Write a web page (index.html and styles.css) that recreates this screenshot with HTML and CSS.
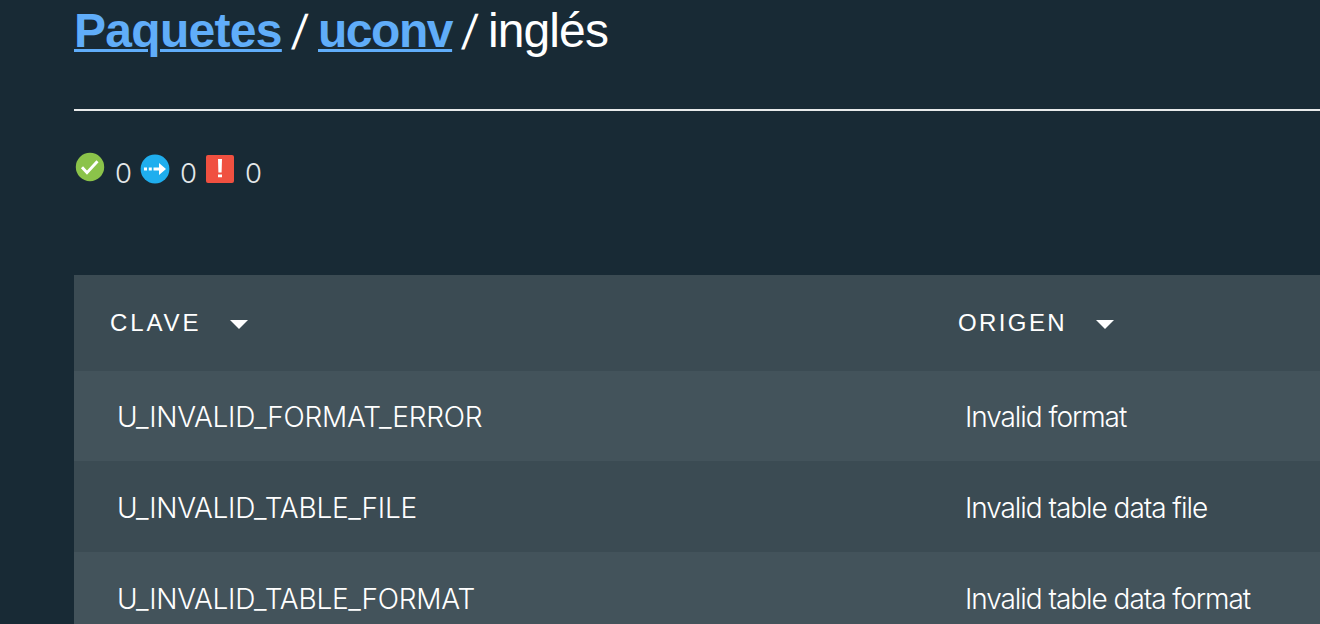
FILE: index.html
```html
<!DOCTYPE html>
<html lang="es">
<head>
<meta charset="utf-8">
<title>uconv / inglés</title>
<link rel="stylesheet" href="styles.css">
</head>
<body>
<main class="page">
  <h1 class="crumbs"><a class="link link-packages" href="#">Paquetes</a><span class="slash">/</span><a class="link link-uconv" href="#">uconv</a><span class="slash">/</span><span class="current">inglés</span></h1>
  <div class="stats">
    <svg class="icon icon-ok" viewBox="0 0 30 30"><circle cx="15" cy="15" r="14.2" fill="#8bc34a"/><path d="M7 15.200l5 5.500 10.500-11.500" fill="none" stroke="#fff" stroke-width="2.900"/></svg>
    <span class="count">0</span>
    <svg class="icon" viewBox="0 0 30 30"><circle cx="15" cy="15" r="14.4" fill="#1faeee"/><path d="M4 13.5h3v3H4zM8.8 13.5h3v3h-3zM13.5 13.5H19V9l7 6-7 6v-4.500h-5.500z" fill="#fff"/></svg>
    <span class="count">0</span>
    <svg class="icon" viewBox="0 0 30 30"><rect x="1" y="1" width="28" height="28" rx="2" fill="#f05040"/><path d="M13 5h4l-.4 13.500h-3.200zM13 20.500h4v2.700h-4z" fill="#fff"/></svg>
    <span class="count">0</span>
  </div>
  <div class="table">
    <div class="row head"><div class="cell key"><span class="label-key">CLAVE</span><i class="arrow"></i></div><div class="cell"><span class="label-origin">ORIGEN</span><i class="arrow"></i></div></div>
    <div class="row first"><div class="cell key">U_INVALID_FORMAT_ERROR</div><div class="cell">Invalid format</div></div>
    <div class="row alt"><div class="cell key">U_INVALID_TABLE_FILE</div><div class="cell">Invalid table data file</div></div>
    <div class="row"><div class="cell key">U_INVALID_TABLE_FORMAT</div><div class="cell">Invalid table data format</div></div>
  </div>
</main>
</body>
</html>
```
FILE: styles.css
```css
* { box-sizing: border-box; }
body { margin: 0; height: 624px; overflow: hidden; background: #182a35; color: #fff; font-family: "Liberation Sans", Arial, sans-serif; }
.page { padding-left: 74px; }
.crumbs { margin: 0; height: 111px; padding-top: 3px; border-bottom: 2px solid #e8eaeb; display: flex; align-items: flex-start; font-size: 48px; line-height: 55px; font-weight: 400; white-space: nowrap; }
.link { color: #60adf9; font-weight: 700; text-decoration-thickness: 3px; text-underline-offset: 2px; }
.link-packages { width: 208px; letter-spacing: -0.7px; }
.link-uconv { width: 134px; letter-spacing: -1.45px; }
.slash { width: 36px; text-align: center; font-family: Inter, sans-serif; font-size: 41px; font-weight: 400; transform: skewX(-7deg); }
.current { letter-spacing: -0.9px; }
.stats { height: 164px; padding-top: 43px; display: flex; align-items: flex-start; }
.icon { width: 30px; height: 30px; margin-left: 1px; flex: none; }
.icon-ok { margin-top: -2px; }
.count { width: 34px; padding: 3px 0 0 10px; font: 300 27.5px/32px Inter, sans-serif; color: #e4e8ea; }
.row { display: flex; height: 91px; background: #43535b; font: 300 28px/94px Inter, sans-serif; white-space: nowrap; }
.first { height: 90px; line-height: 92px; }
.alt { background: #3b4b53; }
.head { height: 96px; background: #3b4b53; font: 400 24px/96px "Liberation Sans", sans-serif; }
.cell { height: 100%; padding-left: 43px; letter-spacing: -1.05px; }
.key { width: 848px; flex: none; letter-spacing: -0.25px; }
.head .cell { padding-left: 36px; display: flex; letter-spacing: 2.4px; }
.head .label-key { width: 120px; letter-spacing: 2.9px; }
.label-origin { width: 138px; }
.arrow { width: 18px; height: 9px; margin-top: 45px; background: #fff; clip-path: polygon(0 0, 100% 0, 50% 100%); }
```
